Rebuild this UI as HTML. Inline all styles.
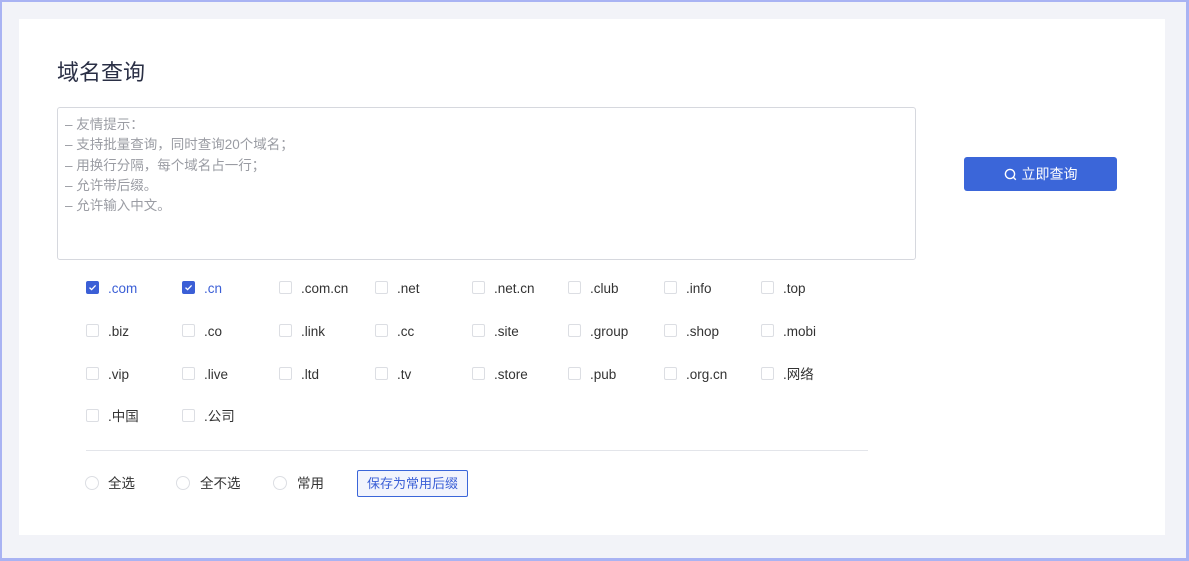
<!DOCTYPE html>
<html><head><meta charset="utf-8"><style>
*{margin:0;padding:0;box-sizing:border-box}
html,body{width:1189px;height:561px;overflow:hidden}
body{background:#f2f3f8;font-family:"Liberation Sans","Noto Sans CJK SC",sans-serif;position:relative}
.frame{position:absolute;left:0;top:0;width:1189px;height:561px;border:2px solid #a9b3f3;border-bottom-width:3px;border-right-width:3px;pointer-events:none}
.card{position:absolute;left:19px;top:19px;width:1146px;height:516px;background:#fff}
.a{position:absolute}
h1{position:absolute;left:57px;top:58px;font-size:22px;font-weight:400;color:#2a2f45;line-height:30px}
.ta{position:absolute;left:57px;top:107px;width:859px;height:153px;border:1px solid #d6d8de;border-radius:3px;padding:7px 0 0 7px;font-size:13.5px;line-height:20.3px;color:#9a9ca3}
.btn{position:absolute;left:964px;top:157px;width:153px;height:34px;background:#3b66d9;border-radius:3px;color:#fff;font-size:14px;display:flex;align-items:center;justify-content:center;gap:5px}
.cb{position:absolute;width:13px;height:13px;border:1px solid #dcdee3;border-radius:2px;background:#fff}
.cb.on{background:#3b5fd6;border-color:#3b5fd6}
.lb{position:absolute;font-size:13.5px;color:#333;line-height:16px}
.lb.on{color:#3b5fd6}
.rd{position:absolute;width:14px;height:14px;border:1px solid #dcdee3;border-radius:50%}
.sv{position:absolute;left:357px;top:470px;width:111px;height:27px;border:1px solid #3b66d9;border-radius:2px;background:#f2f4fd;color:#3b5fd6;font-size:13px;text-align:center;line-height:25px}
</style></head><body>
<div class="card"></div>
<h1>域名查询</h1>
<div class="ta">– 友情提示：<br>– 支持批量查询，同时查询20个域名；<br>– 用换行分隔，每个域名占一行；<br>– 允许带后缀。<br>– 允许输入中文。</div>
<div class="btn"><svg width="13" height="13" viewBox="0 0 13 13"><circle cx="6" cy="6" r="4.6" fill="none" stroke="#fff" stroke-width="1.4"/><line x1="9.4" y1="9.4" x2="11.8" y2="11.8" stroke="#fff" stroke-width="1.4"/></svg>立即查询</div>
<div id="g"></div>
<div class="a" style="left:86px;top:450px;width:782px;height:1px;background:#e3e5ea"></div>
<div class="rd" style="left:85px;top:476px"></div><div class="lb" style="left:108px;top:476px">全选</div>
<div class="rd" style="left:176px;top:476px"></div><div class="lb" style="left:200px;top:476px">全不选</div>
<div class="rd" style="left:273px;top:476px"></div><div class="lb" style="left:297px;top:476px">常用</div>
<div class="sv">保存为常用后缀</div>
<div class="frame"></div>
<script>
var rows=[[".com",".cn",".com.cn",".net",".net.cn",".club",".info",".top"],[".biz",".co",".link",".cc",".site",".group",".shop",".mobi"],[".vip",".live",".ltd",".tv",".store",".pub",".org.cn",".网络"],[".中国",".公司"]];
var xs=[86,182,279,375,472,568,664,761],ys=[288,331,374,416],h="";
rows.forEach(function(r,i){r.forEach(function(t,j){var on=i==0&&j<2;var x=xs[j],y=ys[i];
h+='<div class="cb'+(on?' on':'')+'" style="left:'+x+'px;top:'+(y-7)+'px">'+(on?'<svg width="11" height="11" viewBox="0 0 11 11" style="position:absolute;left:0;top:0"><path d="M2.5 5.6L4.6 7.6L8.6 3.4" fill="none" stroke="#fff" stroke-width="1.3"/></svg>':'')+'</div>';
h+='<div class="lb'+(on?' on':'')+'" style="left:'+(x+22)+'px;top:'+(y-7)+'px">'+t+'</div>';});});
document.getElementById("g").innerHTML=h;
</script>
</body></html>
